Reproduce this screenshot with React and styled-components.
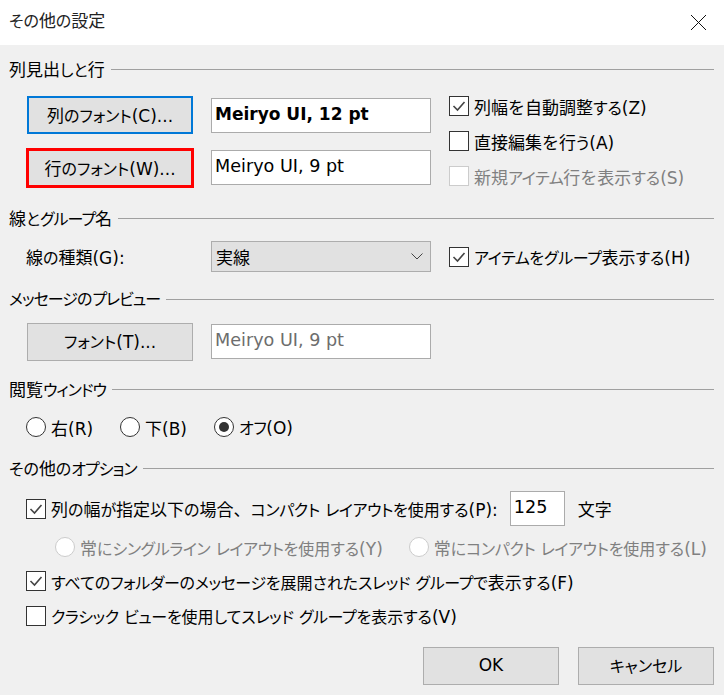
import React from 'react'
import styled, {createGlobalStyle} from 'styled-components'

const Global = createGlobalStyle`
    html, body {
        margin: 0;
        padding: 0;
        background: #f0f0f0;
    }
    * {
        box-sizing: border-box;
    }
`

const Dialog = styled.div`
    --kata: -0.4px;
    width: 724px;
    height: 695px;
    overflow: hidden;
    background: #f0f0f0;
    color: #000;
    font-family: "DejaVu Sans", "Noto Sans CJK JP", sans-serif;
    font-size: 17px;
`

// kana is set narrower than kanji, the way the UI font of the dialog does it
const Kana = styled.span`
    font-size: 16px;
    font-feature-settings: "palt";
    letter-spacing: ${({$kata}) => ($kata ? 'var(--kata)' : '0')};
`

function Jp({children}) {
    return children.split(/([ぁ-ゑん]+|[ァ-ヶー]+)/).map((part, index) => {
        if (/^[ァ-ヶー]/.test(part)) return <Kana $kata key={index}>{part}</Kana>
        if (/^[ぁ-ん]/.test(part)) return <Kana key={index}>{part}</Kana>
        return part
    })
}

const TitleBar = styled.div`
    height: 45px;
    background: #fff;
    display: flex;
    align-items: center;
    justify-content: space-between;
    padding: 0 18px 6px 9px;
    color: #222;
`

const CloseIcon = styled.svg`
    width: 15px;
    height: 15px;
    stroke: #111;
    stroke-width: 1;
    margin-top: 6px;
`

const Body = styled.div`
    padding: 12px 10px 0 9px;
`

const SectionTitle = styled.div`
    --kata: -1px;
    height: 24px;
    display: flex;
    align-items: center;
    gap: 6px;
    white-space: nowrap;

    &::after {
        content: '';
        flex: 1;
        height: 1px;
        background: #a0a0a0;
    }
`

const Heading = styled.span`
    margin-top: -2px;
`

const SectionBody = styled.div`
    padding: ${({$top}) => $top}px 0 ${({$bottom}) => $bottom}px 17px;
`

const Columns = styled.div`
    display: grid;
    grid-template-columns: 185px 238px 1fr;
    grid-auto-rows: ${({$row}) => $row}px;
    row-gap: 15px;
    align-items: center;
`

const Stack = styled.div`
    grid-column: 3;
    grid-row: 1 / span 2;
    align-self: start;
    display: flex;
    flex-direction: column;
    gap: 15px;
`

const Button = styled.button`
    --kata: 0px;
    width: ${({$wide}) => $wide || 166}px;
    height: 38px;
    margin: 0 0 0 ${({$wide}) => ($wide ? 0 : 1)}px;
    padding: 0 0 2px;
    background: #e1e1e1;
    border: ${({$focus}) => ($focus ? '2px solid #0078d7' : '1px solid #adadad')};
    outline: ${({$marked}) => ($marked ? '3px solid #f00' : 'none')};
    outline-offset: -2px;
    color: #000;
    font: inherit;
`

const TextBox = styled.div`
    width: ${({$width}) => $width || 220}px;
    height: 35px;
    margin-top: ${({$shift}) => $shift || 0}px;
    padding: 0 3px 4px;
    display: flex;
    align-items: center;
    align-self: start;
    background: #fff;
    border: 1px solid #ababab;
    color: ${({$muted}) => ($muted ? '#6d6d6d' : '#000')};
    font-size: ${({$bold}) => ($bold ? 17 : 17.6)}px;
    font-weight: ${({$bold}) => ($bold ? 700 : 400)};
    white-space: nowrap;
`

const Select = styled.div`
    width: 220px;
    height: 31px;
    padding: 0 7px 0 4px;
    display: flex;
    align-items: center;
    justify-content: space-between;
    background: #e1e1e1;
    border: 1px solid #adadad;
`

const Chevron = styled.svg`
    width: 12px;
    height: 7px;
    fill: none;
    stroke: #444;
    stroke-width: 1;
`

const Option = styled.div`
    display: flex;
    align-items: center;
    gap: 5px;
    height: 20px;
    white-space: nowrap;
    color: ${({$off}) => ($off ? '#808080' : '#000')};
`

const Box = styled.span`
    flex: none;
    width: 20px;
    height: 20px;
    display: flex;
    align-items: center;
    justify-content: center;
    background: #fff;
    border: 1px solid ${({$off}) => ($off ? '#ccc' : '#333')};
`

const Tick = styled.svg`
    width: 14px;
    height: 12px;
    fill: none;
    stroke: #444;
    stroke-width: 1.6;
`

const Round = styled(Box)`
    border-radius: 50%;
`

const Dot = styled.span`
    width: 10px;
    height: 10px;
    border-radius: 50%;
    background: #333;
`

const Inline = styled.div`
    display: flex;
    align-items: center;
    gap: ${({$gap}) => $gap}px;
    margin-left: ${({$indent}) => $indent || 0}px;
`

const Unit = styled.span`
    margin-left: 1px;
`

const Options = styled.div`
    display: flex;
    flex-direction: column;
    gap: 15px;
    margin-top: ${({$top}) => $top}px;
`

const Footer = styled.div`
    display: flex;
    justify-content: flex-end;
    gap: 19px;
    margin-top: 21px;
`

function Check({label, checked, off}) {
    return (
        <Option $off={off}>
            <Box $off={off}>
                {checked && (
                    <Tick viewBox="0 0 14 12">
                        <polyline points="1.5,6 5.5,10 12.5,2" />
                    </Tick>
                )}
            </Box>
            <span><Jp>{label}</Jp></span>
        </Option>
    )
}

function Radio({label, checked, off}) {
    return (
        <Option $off={off}>
            <Round $off={off}>{checked && <Dot />}</Round>
            <span><Jp>{label}</Jp></span>
        </Option>
    )
}

export default function App() {
    return (
        <Dialog>
            <Global />
            <TitleBar>
                <span><Jp>その他の設定</Jp></span>
                <CloseIcon viewBox="0 0 15 15">
                    <line x1="0" y1="0" x2="15" y2="15" />
                    <line x1="15" y1="0" x2="0" y2="15" />
                </CloseIcon>
            </TitleBar>
            <Body>
                <SectionTitle><Heading><Jp>列見出しと行</Jp></Heading></SectionTitle>
                <SectionBody $top={15} $bottom={19}>
                    <Columns $row={38}>
                        <Button $focus><Jp>列のフォント(C)...</Jp></Button>
                        <TextBox $bold $shift={2}>Meiryo UI, 12 pt</TextBox>
                        <Stack>
                            <Check checked label="列幅を自動調整する(Z)" />
                            <Check label="直接編集を行う(A)" />
                            <Check off label="新規アイテム行を表示する(S)" />
                        </Stack>
                        <Button $marked><Jp>行のフォント(W)...</Jp></Button>
                        <TextBox $shift={1}>Meiryo UI, 9 pt</TextBox>
                    </Columns>
                </SectionBody>

                <SectionTitle><Heading><Jp>線とグループ名</Jp></Heading></SectionTitle>
                <SectionBody $top={11} $bottom={15}>
                    <Columns $row={31}>
                        <span><Jp>線の種類(G):</Jp></span>
                        <Select>
                            実線
                            <Chevron viewBox="0 0 12 7">
                                <polyline points="0.5,0.5 6,6 11.5,0.5" />
                            </Chevron>
                        </Select>
                        <Check checked label="アイテムをグループ表示する(H)" />
                    </Columns>
                </SectionBody>

                <SectionTitle><Heading><Jp>メッセージのプレビュー</Jp></Heading></SectionTitle>
                <SectionBody $top={12} $bottom={16}>
                    <Columns $row={38}>
                        <Button><Jp>フォント(T)...</Jp></Button>
                        <TextBox $muted $shift={1}>Meiryo UI, 9 pt</TextBox>
                    </Columns>
                </SectionBody>

                <SectionTitle><Heading><Jp>閲覧ウィンドウ</Jp></Heading></SectionTitle>
                <SectionBody $top={16} $bottom={19}>
                    <Inline $gap={27}>
                        <Radio label="右(R)" />
                        <Radio label="下(B)" />
                        <Radio checked label="オフ(O)" />
                    </Inline>
                </SectionBody>

                <SectionTitle><Heading><Jp>その他のオプション</Jp></Heading></SectionTitle>
                <SectionBody $top={11} $bottom={0}>
                    <Inline $gap={12}>
                        <Check checked label="列の幅が指定以下の場合、コンパクト レイアウトを使用する(P):" />
                        <TextBox $width={55}>125</TextBox>
                        <Unit>文字</Unit>
                    </Inline>
                    <Options $top={11}>
                        <Inline $gap={26} $indent={29}>
                            <Radio off label="常にシングルライン レイアウトを使用する(Y)" />
                            <Radio off label="常にコンパクト レイアウトを使用する(L)" />
                        </Inline>
                    </Options>
                    <Options $top={14}>
                        <Check checked label="すべてのフォルダーのメッセージを展開されたスレッド グループで表示する(F)" />
                        <Check label="クラシック ビューを使用してスレッド グループを表示する(V)" />
                    </Options>
                    <Footer>
                        <Button $wide={136}>OK</Button>
                        <Button $wide={136}><Jp>キャンセル</Jp></Button>
                    </Footer>
                </SectionBody>
            </Body>
        </Dialog>
    )
}
